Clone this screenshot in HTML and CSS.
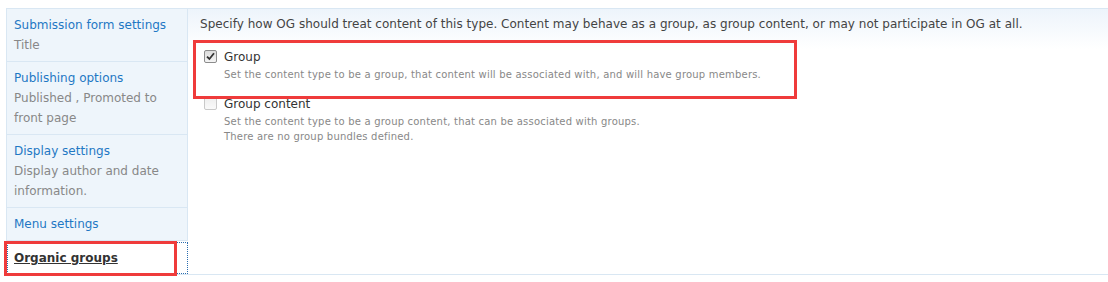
FILE: index.html
```html
<!DOCTYPE html>
<html lang="en">
<head>
  <meta charset="UTF-8" />
  <title>Content type - Organic groups</title>
  <link rel="stylesheet" href="styles.css">
</head>
<body>
  <div class="vertical-tabs">
    <ul class="vertical-tabs-list">
      <li class="vertical-tab">
        <a href="#"><strong>Submission form settings</strong><span class="summary">Title</span></a>
      </li>
      <li class="vertical-tab">
        <a href="#"><strong>Publishing options</strong><span class="summary">Published , Promoted to front page</span></a>
      </li>
      <li class="vertical-tab">
        <a href="#"><strong>Display settings</strong><span class="summary">Display author and date information.</span></a>
      </li>
      <li class="vertical-tab">
        <a href="#"><strong>Menu settings</strong></a>
      </li>
      <li class="vertical-tab selected">
        <a href="#"><strong>Organic groups</strong></a>
      </li>
    </ul>

    <div class="vertical-tabs-panes">
      <p class="pane-intro">Specify how OG should treat content of this type. Content may behave as a group, as group content, or may not participate in OG at all.</p>

      <div class="form-item">
        <span class="checkbox checked">
          <svg width="9" height="9" viewBox="0 0 9 9"><path d="M1 4.6 L3.4 7 L8 1.2" fill="none" stroke="#333" stroke-width="1.8"/></svg>
        </span>
        <div class="form-text">
          <label>Group</label>
          <div class="description">Set the content type to be a group, that content will be associated with, and will have group members.</div>
        </div>
      </div>

      <div class="form-item">
        <span class="checkbox"></span>
        <div class="form-text">
          <label>Group content</label>
          <div class="description">Set the content type to be a group content, that can be associated with groups.<br>There are no group bundles defined.</div>
        </div>
      </div>
    </div>
  </div>

  <div class="highlight highlight-group"></div>
  <div class="highlight highlight-tab"></div>
</body>
</html>
```

FILE: styles.css
```css
body {
  margin: 0;
  padding: 8px 0 0 6px;
  font-family: "DejaVu Sans", Verdana, sans-serif;
  font-size: 12px;
  color: #444;
  background: #fff;
  overflow: hidden;
}
.vertical-tabs {
  display: flex;
  align-items: flex-start;
}
.vertical-tabs-list {
  list-style: none;
  margin: 0;
  padding: 0;
  width: 180px;
  flex-shrink: 0;
  background: #eef5fb;
  border-top: 1px solid #d9e7f3;
  border-left: 1px solid #d9e7f3;
  position: relative;
  z-index: 1;
}
.vertical-tab {
  border-bottom: 1px solid #d9e7f3;
}
.vertical-tab a {
  display: block;
  padding: 6px 7px;
  line-height: 20px;
  text-decoration: none;
  color: #1f78c4;
}
.vertical-tab strong {
  display: block;
  font-weight: normal;
}
.vertical-tab .summary {
  display: block;
  color: #888;
}
.vertical-tab.selected {
  background: #fff;
  margin-right: -1px;
  padding-top: 1px;
}
.vertical-tab.selected a {
  color: #333;
  outline: 1px dotted #2a6db0;
  outline-offset: -1px;
}
.vertical-tab.selected strong {
  font-weight: bold;
  text-decoration: underline;
}
.vertical-tabs-panes {
  flex: 1;
  align-self: stretch;
  border-top: 1px solid #d9e7f3;
  border-left: 1px solid #d9e7f3;
  border-bottom: 1px solid #d9e7f3;
  background: linear-gradient(#edf4fb, #fff 40px);
  padding: 5px 12px 0;
}
.pane-intro {
  margin: 0 0 13px;
  line-height: 20px;
  letter-spacing: 0.02px;
}
.form-item {
  display: flex;
  align-items: flex-start;
  margin-bottom: 12px;
}
.checkbox {
  width: 11px;
  height: 11px;
  margin: 3px 7px 0 4px;
  border: 1px solid #c9c9c9;
  border-radius: 2px;
  background: linear-gradient(#eee, #fafafa);
  display: flex;
  align-items: center;
  justify-content: center;
  flex-shrink: 0;
}
.checkbox.checked {
  border-color: #8c8c8c;
  background: linear-gradient(#dcdcdc, #f4f4f4);
}
.form-text label {
  display: block;
  line-height: 20px;
  color: #333;
}
.description {
  font-size: 10px;
  line-height: 15px;
  letter-spacing: 0.2px;
  color: #888;
}
.highlight {
  position: absolute;
  z-index: 2;
  border: 3px solid #ef3b3b;
  box-sizing: border-box;
}
.highlight-group {
  left: 193px;
  top: 40px;
  width: 604px;
  height: 59px;
}
.highlight-tab {
  left: 4px;
  top: 241px;
  width: 173px;
  height: 35px;
}
```
